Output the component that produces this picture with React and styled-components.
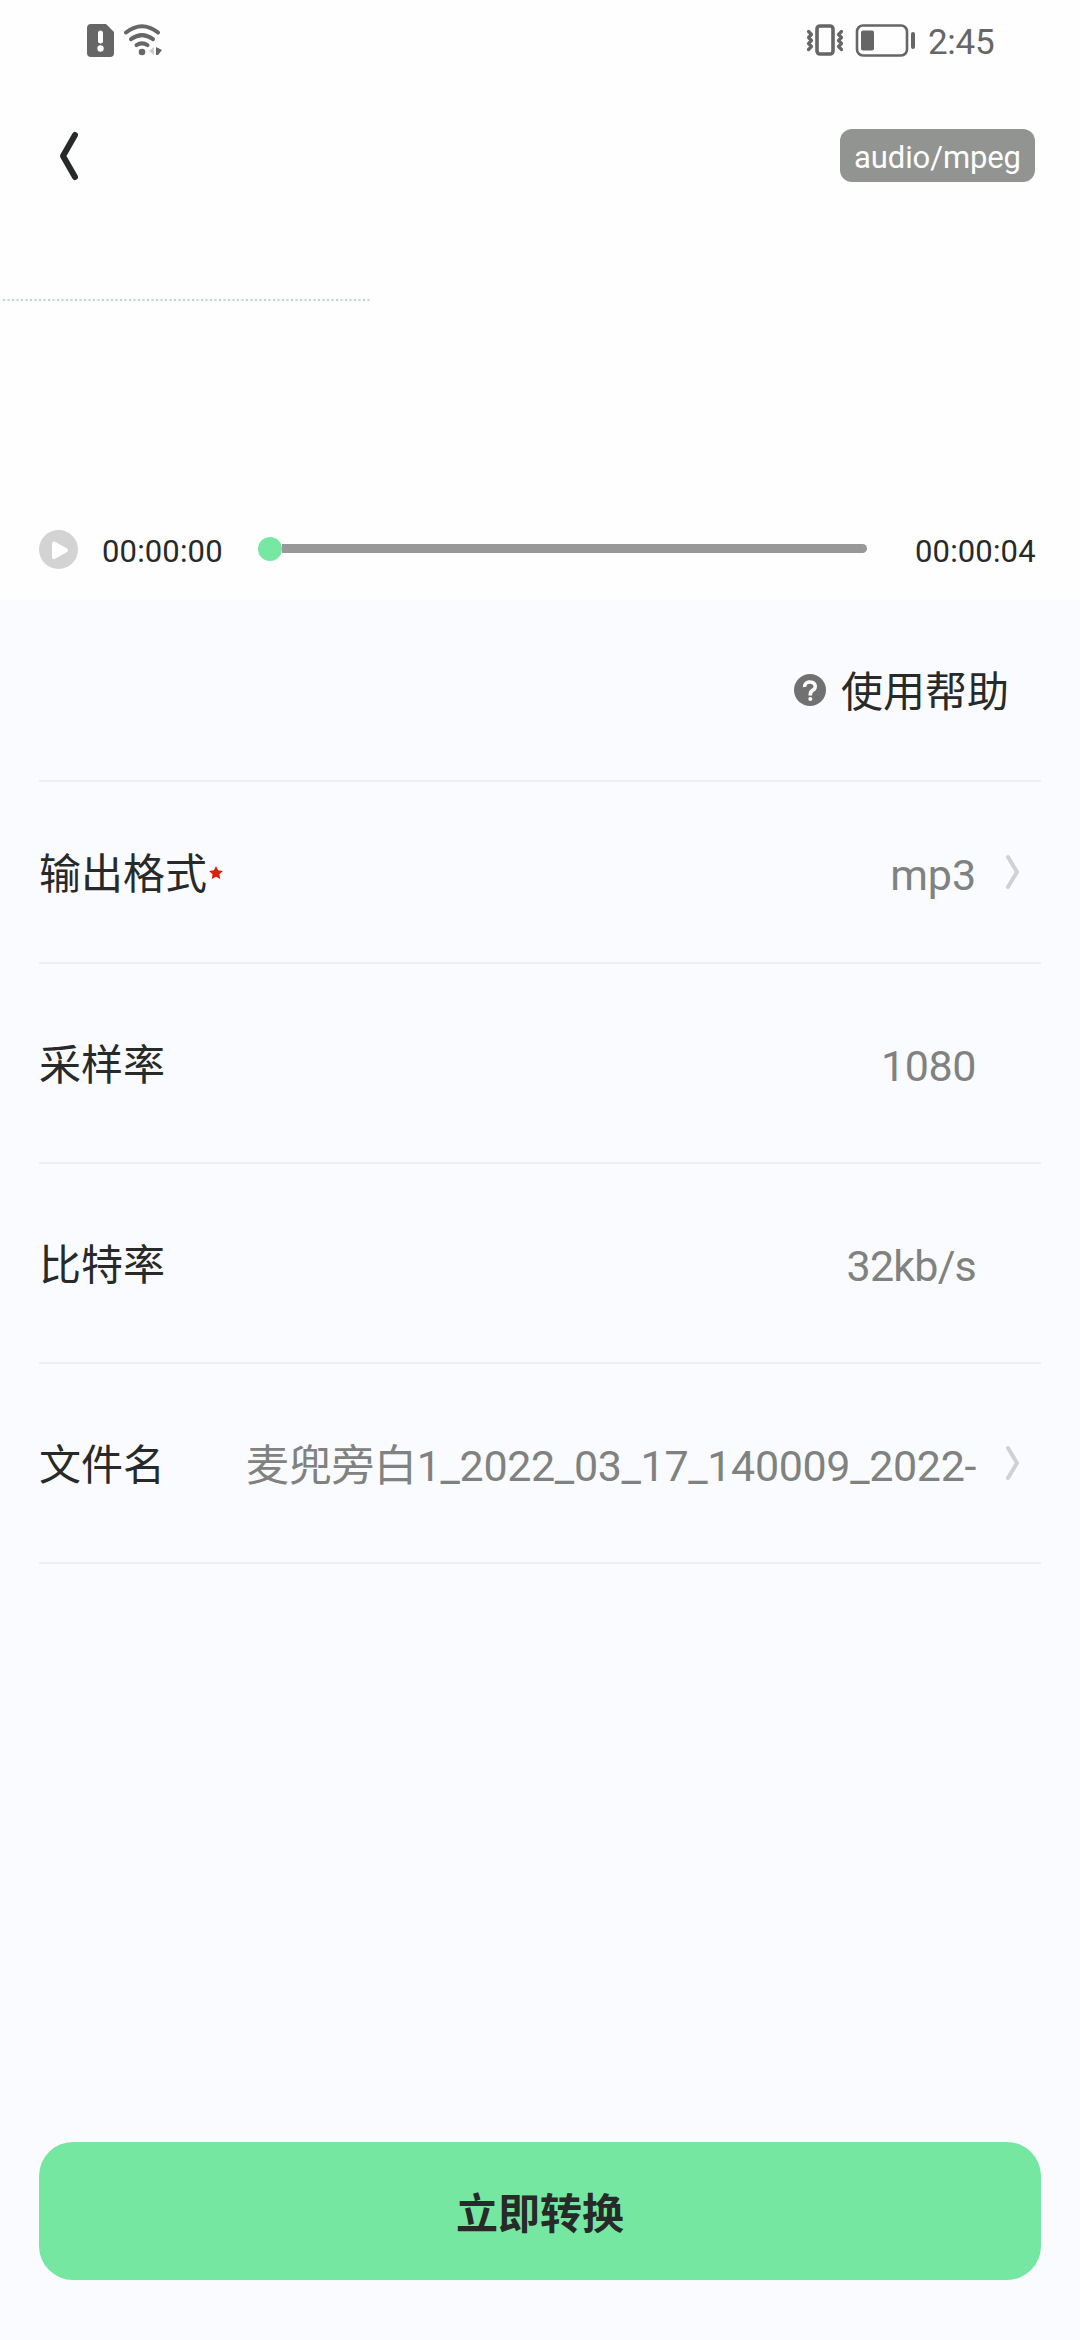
import React from 'react'
import styled, { createGlobalStyle } from 'styled-components'


const GlobalStyle = createGlobalStyle`
    *{
        box-sizing: border-box;
    }
    body{
        margin: 0;
        background: #fafbff;
    }
`
const Page = styled.div`
    width: 1080px;
    height: 2340px;
    display: flex;
    flex-direction: column;
    overflow: hidden;
    background: #fafbff;
    color: #272a28;
    font-family: Roboto, "Noto Sans CJK SC", sans-serif;
`
const Header = styled.header`
    height: 600px;
    display: flex;
    flex-direction: column;
    background: #fefefe;
`
const StatusBar = styled.div`
    height: 80px;
    display: flex;
    align-items: center;
    justify-content: space-between;
    padding: 2px 86px 0 84px;
`
const StatusGroup = styled.div`
    display: flex;
    align-items: center;
    gap: ${({ $gap }) => $gap || 0}px;
`
const Clock = styled.span`
    margin-left: 10px;
    padding-top: 3px;
    width: 66px;
    font-size: 35px;
    line-height: 40px;
    letter-spacing: -.3px;
    color: #666;
    white-space: nowrap;
`
const NavBar = styled.nav`
    height: 151px;
    display: flex;
    align-items: center;
    justify-content: space-between;
    padding: 0 45px 0 54px;
`
const BackButton = styled.button`
    display: flex;
    padding: 0;
    border: none;
    background: none;
    cursor: pointer;
`
const Badge = styled.span`
    width: 195px;
    height: 53px;
    border-radius: 12px;
    background: #929491;
    color: #fff;
    font-size: 31px;
    line-height: 58px;
    letter-spacing: -.1px;
    text-align: center;
`
const Wave = styled.div`
    flex: 1;
    padding-top: 68px;
`
const Player = styled.div`
    height: 101px;
    display: flex;
    align-items: center;
    padding: 0 45px 0 39px;
`
const PlayButton = styled(BackButton)`
    margin-right: 23px;
`
const Time = styled.span`
    width: 120px;
    padding-top: 4px;
    font-size: 31px;
    line-height: 36px;
    letter-spacing: .15px;
    white-space: nowrap;
`
const Slider = styled.div`
    flex: 1;
    height: 26px;
    display: flex;
    align-items: center;
    margin: 0 48px 0 36px;
    padding-bottom: 2px;
`
const Thumb = styled.div`
    width: 24px;
    height: 24px;
    border-radius: 50%;
    background: #77e8a2;
`
const Track = styled.div`
    flex: 1;
    height: 9px;
    border-radius: 0 5px 5px 0;
    background: #989898;
`
const Content = styled.main`
    flex: 1;
    padding: 0 39px;
`
const Help = styled.div`
    height: 182px;
    display: flex;
    align-items: center;
    justify-content: flex-end;
    gap: 15px;
    padding-right: 32px;
    border-bottom: 2px solid #eeeff3;
`
const HelpText = styled.span`
    padding-top: 6px;
    font-size: 42px;
    line-height: 60px;
`
const Row = styled.div`
    height: ${({ $height }) => $height || 200}px;
    display: flex;
    align-items: center;
    padding-right: 20px;
    border-bottom: 2px solid #eeeff5;
`
const Label = styled.span`
    display: flex;
    align-items: center;
    padding-top: 6px;
    font-size: 42px;
    line-height: 60px;
    white-space: nowrap;
    svg{
        margin: -4px 0 0 -1px;
    }
`
const Value = styled.span`
    flex: 1;
    padding-top: 5px;
    text-align: right;
    font-size: 43px;
    line-height: 60px;
    letter-spacing: ${({ $spacing }) => $spacing || 0}px;
    color: #808280;
    white-space: nowrap;
`
const ArrowSlot = styled.span`
    width: 45px;
    display: flex;
    justify-content: flex-end;
`
const Footer = styled.footer`
    height: 198px;
    padding: 0 39px;
`
const ConvertButton = styled.button`
    width: 100%;
    height: 138px;
    padding: 0 0 2px;
    border: none;
    border-radius: 34px;
    background: #75e7a1;
    color: #272a28;
    font-family: inherit;
    font-size: 42px;
    font-weight: 700;
    cursor: pointer;
`


const SimIcon = () => (
    <svg width="33" height="34" viewBox="84 24 33 34">
        <path d="M91 24h15l8 8v21a4 4 0 0 1-4 4H91a4 4 0 0 1-4-4V28a4 4 0 0 1 4-4z" fill="#666" />
        <path d="M100.500 33v8" stroke="#fff" strokeWidth="5" strokeLinecap="round" />
        <circle cx="100.500" cy="48.500" r="3.200" fill="#fff" />
    </svg>
)

const WifiIcon = () => (
    <svg width="42" height="34" viewBox="122 24 42 34">
        <g fill="none" stroke="#666" strokeWidth="4" strokeLinecap="round">
            <path d="M126 32.500Q142 20 158 32.500" />
            <path d="M131 39.200Q142 31 153 39.200" />
            <path d="M136.500 45.200Q142 41.500 147.500 45.200" />
        </g>
        <circle cx="142" cy="52" r="3.300" fill="#666" />
        <path d="M154 47v8l-5-4z" fill="#ccc" />
        <path d="M156 47l6 3-4 5h-2z" fill="#666" />
    </svg>
)

const VibrateIcon = () => (
    <svg width="42" height="34" viewBox="805 23 42 34">
        <rect x="818" y="25" width="16" height="28" rx="3" fill="none" stroke="#666" strokeWidth="3.600" />
        <g fill="none" stroke="#666" strokeWidth="3.200" strokeLinejoin="round" strokeLinecap="round">
            <path d="M809.500 30.500l3 3-3 3 3 3-3 3 3 3-3 3" />
            <path d="M842.500 30.500l-3 3 3 3-3 3 3 3-3 3 3 3" />
        </g>
    </svg>
)

const BatteryIcon = () => (
    <svg width="72" height="34" viewBox="847 23 72 34">
        <rect x="858" y="24.500" width="50" height="30" rx="6" fill="none" stroke="#666" strokeWidth="2.600" />
        <rect x="862" y="29.500" width="13" height="20" rx="2" fill="#666" />
        <rect x="912" y="31" width="4" height="17" rx="2" fill="#666" />
    </svg>
)

const BackIcon = () => (
    <svg width="30" height="60" viewBox="54 126 30 60">
        <path d="M75 135L63 156l12 21" fill="none" stroke="#272a28" strokeWidth="6" strokeLinecap="round" strokeLinejoin="round" />
    </svg>
)

const WaveLine = () => (
    <svg width="400" height="4" viewBox="0 0 400 4" display="block">
        <path d="M3 1h367.500" stroke="#b3dcc2" strokeWidth="2" strokeDasharray="2 2.500" />
    </svg>
)

const PlayIcon = () => (
    <svg width="40" height="40" viewBox="0 0 40 40">
        <circle cx="19.500" cy="19.500" r="19.500" fill="#d3d3d3" />
        <path d="M15 13.500L27 20.300 15 27z" fill="#fff" stroke="#fff" strokeWidth="4" strokeLinejoin="round" />
    </svg>
)

const HelpIcon = () => (
    <svg width="32" height="32" viewBox="0 0 32 32">
        <circle cx="16" cy="16" r="16" fill="#717171" />
        <path d="M10.700 13a5.300 4.500 0 1 1 7.800 3.400Q16.200 17.800 16.200 21.500" fill="none" stroke="#fff" strokeWidth="3.600" />
        <circle cx="16.300" cy="25" r="2" fill="#fff" />
    </svg>
)

const StarIcon = () => (
    <svg width="18" height="16" viewBox="0 0 18 16">
        <path d="M10 1l2.100 4.300 4.900.6-3.600 3.300.9 4.800-4.300-2.300L5.700 14l.9-4.800L3 5.900l4.900-.6z" fill="#df1e0d" />
    </svg>
)

const ArrowIcon = () => (
    <svg width="18" height="38" viewBox="1003 853 18 38">
        <path d="M1008 857l9 15-9 15" fill="none" stroke="#d0d1d3" strokeWidth="4" strokeLinecap="round" strokeLinejoin="round" />
    </svg>
)


const rows = [
    { label: '输出格式', value: 'mp3', required: true, arrow: true, height: 182, spacing: -.1 },
    { label: '采样率', value: '1080', spacing: -.4 },
    { label: '比特率', value: '32kb/s', spacing: -.8 },
    { label: '文件名', value: '麦兜旁白1_2022_03_17_140009_2022-', arrow: true, spacing: -.35 },
]

const App = () => {


    return (
        <>
            <GlobalStyle />
            <Page>
                <Header>
                    <StatusBar>
                        <StatusGroup $gap={5}>
                            <SimIcon />
                            <WifiIcon />
                        </StatusGroup>
                        <StatusGroup>
                            <VibrateIcon />
                            <BatteryIcon />
                            <Clock>2:45</Clock>
                        </StatusGroup>
                    </StatusBar>
                    <NavBar>
                        <BackButton><BackIcon /></BackButton>
                        <Badge>audio/mpeg</Badge>
                    </NavBar>
                    <Wave><WaveLine /></Wave>
                    <Player>
                        <PlayButton><PlayIcon /></PlayButton>
                        <Time>00:00:00</Time>
                        <Slider>
                            <Thumb />
                            <Track />
                        </Slider>
                        <Time>00:00:04</Time>
                    </Player>
                </Header>
                <Content>
                    <Help>
                        <HelpIcon />
                        <HelpText>使用帮助</HelpText>
                    </Help>
                    {rows.map(row => (
                        <Row key={row.label} $height={row.height}>
                            <Label>{row.label}{row.required && <StarIcon />}</Label>
                            <Value $spacing={row.spacing}>{row.value}</Value>
                            <ArrowSlot>{row.arrow && <ArrowIcon />}</ArrowSlot>
                        </Row>
                    ))}
                </Content>
                <Footer>
                    <ConvertButton>立即转换</ConvertButton>
                </Footer>
            </Page>
        </>
    )
}

export default App
